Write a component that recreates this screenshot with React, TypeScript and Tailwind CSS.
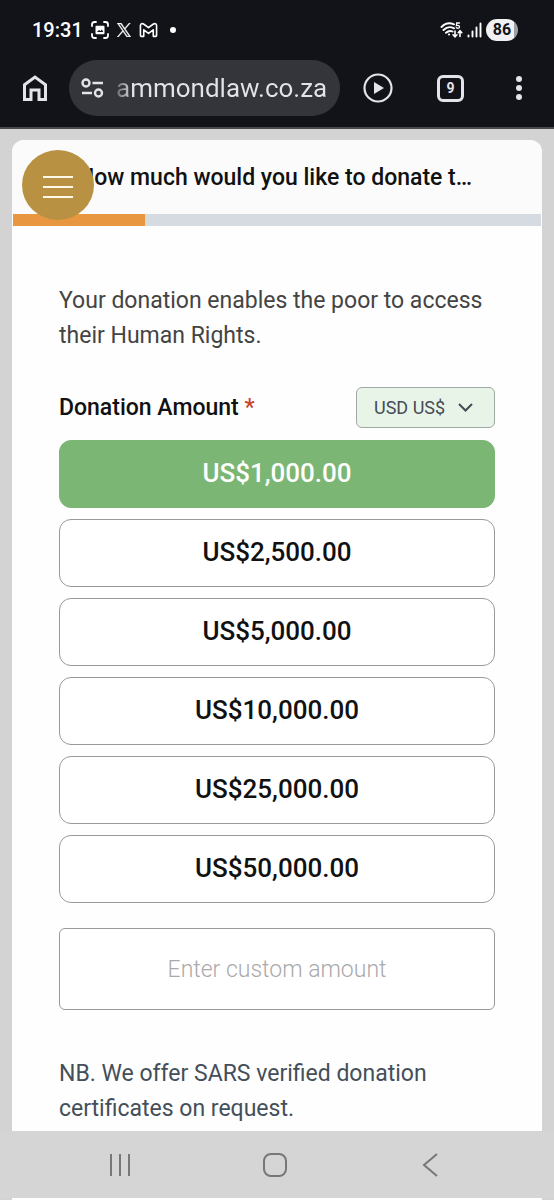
import { useState } from "react";

const amounts = [
    "US$1,000.00",
    "US$2,500.00",
    "US$5,000.00",
    "US$10,000.00",
    "US$25,000.00",
    "US$50,000.00",
];

function StatusBar() {
    return (
        <div className="flex h-[60px] items-center justify-between pr-9 pl-8 text-white">
            <div className="flex items-center gap-2">
                <span className="text-xl font-medium">19:31</span>
                <svg width="18" height="18" viewBox="0 0 18 18" fill="none" stroke="currentColor" strokeWidth="1.8" strokeLinecap="round">
                    <path d="M1 5V3.500Q1 1 3.500 1H5M13 1h1.500Q17 1 17 3.500V5M17 13v1.500Q17 17 14.500 17H13M5 17H3.500Q1 17 1 14.500V13" />
                    <rect x="4.500" y="4.800" width="9" height="8.400" rx="1" fill="currentColor" stroke="none" />
                    <path d="M6 11l2-2 1.500 1 1.500-1.500 1.200 2.500z" fill="#121318" stroke="none" />
                </svg>
                <svg width="14" height="14" viewBox="0 0 24 24" fill="currentColor" stroke="currentColor" strokeWidth="0.8">
                    <path d="M14.234 10.162 22.977 0h-2.072l-7.591 8.824L7.251 0H.258l9.168 13.343L.258 24H2.330l8.016-9.318L16.749 24h6.993zm-2.837 3.299-.929-1.329L3.076 1.560h3.182l5.965 8.532.929 1.329 7.754 11.090h-3.182z" />
                </svg>
                <svg width="19" height="16" viewBox="0 0 20 16" fill="none" stroke="currentColor" strokeWidth="1.700" strokeLinejoin="round">
                    <path d="M1.500 3.200v10.600q0 .9.900.9H5V7.800l5 3.700 5-3.700v6.900h2.600q.9 0 .9-.9V3.200c0-1.800-2-2.500-3.300-1.500L10 5.500 4.800 1.700C3.500.7 1.500 1.400 1.500 3.200z" />
                </svg>
                <span className="ml-1 size-[6px] rounded-full bg-white" />
            </div>
            <div className="flex items-center gap-1">
                <svg width="23" height="18" viewBox="0 0 23 18" fill="none" stroke="currentColor" strokeWidth="1.900" strokeLinecap="round">
                    <path d="M1.500 6C5 2.300 10 1.500 14 3.300M3.500 9C6.500 6 10.500 5.500 14 7.300M6 11.800c2-1.800 4.500-2.200 6.500-1.300" />
                    <circle cx="9" cy="13.500" r="1.100" fill="currentColor" stroke="none" />
                    <path d="M19.500 2H16.700l-.3 2.700c1.500-.7 3.300-.2 3.100 1.300-.2 1.400-2 1.600-3.200.7" strokeWidth="1.300" />
                    <path d="M15 10v5.500M13 13.800l2 2 2-2M20 15.500V10M18.200 11.700l1.800-2 1.800 2" strokeWidth="1.600" />
                </svg>
                <svg width="15" height="16" viewBox="0 0 15 16" stroke="currentColor" strokeWidth="1.900" strokeLinecap="round">
                    <path d="M1.500 13.500v1M5.500 9.500v5M9.500 5.500v9M13.500 1.500v13" />
                </svg>
                <span className="flex h-[22px] w-8 items-center justify-center rounded-full bg-linear-to-r from-[#f1f1f3] from-86% to-[#a0a0a4] to-86% text-base font-bold text-[#121318]">
                    86
                </span>
            </div>
        </div>
    );
}

function BrowserBar() {
    return (
        <div className="flex h-[56px] items-center text-[#e3e3ea]">
            <div className="flex w-[69px] justify-center">
                <button type="button" aria-label="Home">
                    <svg width="24" height="26" viewBox="0 0 24 26" fill="none" stroke="currentColor" strokeWidth="3">
                        <path d="M1.500 9.800 12 2l10.500 7.800v14.700h-6.500V15H8v9.500H1.500z" />
                    </svg>
                </button>
            </div>
            <div className="flex h-full flex-1 items-center gap-3 rounded-full bg-[#34353a] pl-3">
                <svg className="shrink-0" width="23" height="20" viewBox="0 0 23 20" fill="none" stroke="currentColor" strokeWidth="2.400">
                    <circle cx="5" cy="5" r="3.500" />
                    <path d="M11.500 5H22M1 15h10" />
                    <circle cx="17.500" cy="15" r="3.500" />
                </svg>
                <span className="bg-linear-to-r from-[#66676c] to-[#e3e3ea] to-8% bg-clip-text text-[26px] text-transparent">
                    ammondlaw.co.za
                </span>
            </div>
            <div className="flex w-[214px] items-center justify-between pr-8 pl-[23px]">
                <button type="button" aria-label="Play">
                    <svg width="30" height="30" viewBox="0 0 30 30" fill="none" stroke="currentColor" strokeWidth="2.200">
                        <circle cx="15" cy="15" r="13.500" />
                        <path d="M11 9v12l10-6z" fill="currentColor" stroke="none" />
                    </svg>
                </button>
                <button type="button" className="mr-2 flex size-[27px] items-center justify-center rounded-md border-3 border-current text-sm font-bold">
                    9
                </button>
                <button type="button" aria-label="More">
                    <svg width="6" height="24" viewBox="0 0 6 24" fill="currentColor">
                        <circle cx="3" cy="3" r="3" />
                        <circle cx="3" cy="12" r="3" />
                        <circle cx="3" cy="21" r="3" />
                    </svg>
                </button>
            </div>
        </div>
    );
}

function NavBar() {
    return (
        <nav className="flex h-[67px] items-center justify-between bg-[#d5d5d5] pr-28 pl-27 text-[#777]">
            <button type="button" aria-label="Recents">
                <svg width="24" height="24" viewBox="0 0 24 24" stroke="currentColor" strokeWidth="2">
                    <path d="M3 1v22M12 1v22M21 1v22" />
                </svg>
            </button>
            <button type="button" aria-label="Home screen">
                <svg width="24" height="24" viewBox="0 0 24 24" fill="none" stroke="currentColor" strokeWidth="2">
                    <rect x="1" y="1" width="22" height="22" rx="7" />
                </svg>
            </button>
            <button type="button" aria-label="Back">
                <svg width="24" height="24" viewBox="0 0 24 24" fill="none" stroke="currentColor" strokeWidth="2">
                    <path d="M19 1 6 12l13 11" />
                </svg>
            </button>
        </nav>
    );
}

export default function App() {
    const [selected, setSelected] = useState(amounts[0]);

    return (
        <div className="min-h-screen bg-[#d3d3d3] font-['Roboto',sans-serif]">
            <header className="h-[129px] border-b-2 border-[#47484b] bg-[#121318]">
                <StatusBar />
                <BrowserBar />
            </header>

            <main className="px-3 pt-[11px]">
                <div className="relative overflow-hidden rounded-t-xl bg-[#fefefe]">
                    {/* Title */}
                    <div className="flex h-[74px] items-center justify-center bg-[#fbfbfb] pt-[2px] pr-1">
                        <h1 className="text-[23px] font-medium text-[#111]">
                            How much would you like to donate t…
                        </h1>
                    </div>
                    <div className="mx-px h-3 bg-[#d6dbe1]">
                        <div className="h-full w-1/4 bg-[#e8963f]" />
                    </div>

                    {/* Menu */}
                    <button
                        type="button"
                        aria-label="Menu"
                        className="absolute top-[10px] left-[10px] flex h-[70px] w-[72px] flex-col items-center justify-center gap-2 rounded-[50%] bg-[#b89242] pt-[3px]"
                    >
                        <span className="h-[2px] w-[30px] bg-[#fff9e8]" />
                        <span className="h-[2px] w-[30px] bg-[#fff9e8]" />
                        <span className="h-[2px] w-[30px] bg-[#fff9e8]" />
                    </button>

                    <form className="px-[47px] pt-[57px] pb-[5px]" onSubmit={(e) => e.preventDefault()}>
                        <p className="text-[23px] leading-[35px] text-[#444]">
                            Your donation enables the poor to access their Human Rights.
                        </p>

                        <div className="mt-[34px] flex items-center justify-between">
                            <label htmlFor="custom" className="pt-[2px] text-[23px] font-medium text-[#111]">
                                Donation Amount <span className="text-[#c9452c]">*</span>
                            </label>
                            <div className="relative">
                                <select
                                    aria-label="Currency"
                                    className="block h-[41px] w-[139px] appearance-none rounded-md border border-[#9ea8a5] bg-[#e9f4e9] pl-[17px] text-lg text-[#444c55]"
                                >
                                    <option>USD US$</option>
                                </select>
                                <svg className="pointer-events-none absolute top-4 right-[22px]" width="15" height="9" viewBox="0 0 15 9" fill="none" stroke="#444c55" strokeWidth="2">
                                    <path d="M1 1l6.500 6.500L14 1" />
                                </svg>
                            </div>
                        </div>

                        {/* Amounts */}
                        <div className="mt-3 flex flex-col gap-[11px]">
                            {amounts.map((amount) => (
                                <button
                                    key={amount}
                                    type="button"
                                    onClick={() => setSelected(amount)}
                                    className={`h-[68px] rounded-xl border pb-[2px] text-[26px] font-medium ${
                                        selected === amount
                                            ? "border-[#7cb674] bg-[#7cb674] text-white"
                                            : "border-[#999] bg-white text-[#111]"
                                    }`}
                                >
                                    {amount}
                                </button>
                            ))}
                        </div>

                        <input
                            id="custom"
                            type="text"
                            placeholder="Enter custom amount"
                            className="mt-[25px] block h-[82px] w-full rounded-md border border-[#999] bg-white text-center text-[23px] font-light placeholder:text-[#aaa]"
                        />

                        <p className="mt-[46px] text-[23px] leading-[35px] text-[#444f5a]">
                            NB. We offer SARS verified donation certificates on request.
                        </p>
                    </form>
                </div>
            </main>

            <NavBar />
            <div className="mx-3 h-[2px] bg-[#fefefe]" />
        </div>
    );
}
